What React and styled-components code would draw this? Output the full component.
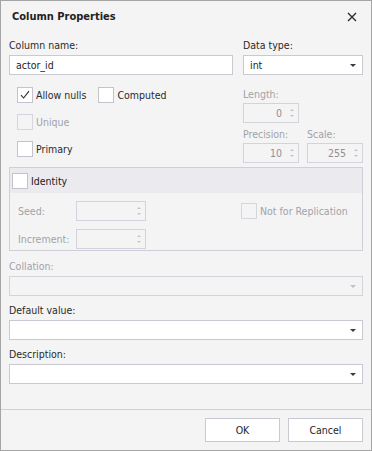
import React from "react";
import styled, { createGlobalStyle, css } from "styled-components";

const Global = createGlobalStyle`
  html, body { margin: 0; padding: 0; background: #ffffff; }
  * { box-sizing: border-box; }
`;

const FONT = `"DejaVu Sans Condensed", "Liberation Sans", sans-serif`;

const Window = styled.div`
  width: 372px;
  height: 451px;
  border: 1px solid #a5a5a5;
  background: #f4f4f4;
  display: flex;
  flex-direction: column;
  font-family: ${FONT};
  font-size: 10.5px;
  color: #252525;
`;

const TitleBar = styled.div`
  height: 31px;
  flex: none;
  display: flex;
  align-items: center;
  justify-content: space-between;
  padding: 0 14px 0 11px;
  font-weight: bold;
  font-size: 11px;
  color: #222;
`;

const CloseButton = styled.button`
  border: 0;
  background: none;
  padding: 0;
  width: 11px;
  height: 11px;
  display: flex;
  align-items: center;
  justify-content: center;
  margin-top: 1px;
`;

const Content = styled.div`
  flex: 1;
  padding: 6px 8px 0 8px;
  display: flex;
  flex-direction: column;
`;

const TopGrid = styled.div`
  display: grid;
  grid-template-columns: 224px 120px;
  column-gap: 10px;
`;

const Field = styled.div`
  display: flex;
  flex-direction: column;
  gap: 3px;
`;

const Label = styled.div`
  height: 14px;
  line-height: 14px;
  white-space: nowrap;
  color: ${(p) => (p.$disabled ? "#a2a2aa" : "#2a2a2a")};
`;

const boxBase = css`
  height: 20px;
  border: 1px solid #c9c9d3;
  background: #ffffff;
  display: flex;
  align-items: center;
`;

const TextInput = styled.div`
  ${boxBase};
  padding-left: 6px;
  color: #1e1e1e;
`;

const Combo = styled.div`
  ${boxBase};
  padding: 0 6px 0 6px;
  justify-content: space-between;
  color: #1e1e1e;
  ${(p) =>
    p.$disabled &&
    css`
      background: #f4f4f4;
      border-color: #d3d3db;
    `}
`;

const Arrow = styled.span`
  width: 0;
  height: 0;
  border-left: 3.5px solid transparent;
  border-right: 3.5px solid transparent;
  border-top: 3.5px solid ${(p) => (p.$disabled ? "#c2c2c8" : "#3a3a3a")};
  margin-top: 1px;
`;

const MiddleGrid = styled.div`
  display: grid;
  grid-template-columns: 224px 120px;
  column-gap: 10px;
  margin-top: 12px;
`;

const CheckColumn = styled.div`
  display: flex;
  flex-direction: column;
  gap: 11px;
  padding-left: 8px;
`;

const CheckRow = styled.div`
  display: flex;
  align-items: center;
  gap: 12px;
`;

const CheckItem = styled.label`
  display: flex;
  align-items: center;
  gap: 3px;
  height: 16px;
  white-space: nowrap;
  color: ${(p) => (p.$disabled ? "#a2a2aa" : p.$strong ? "#1a1a1a" : "#2a2a2a")};
`;

const Box = styled.span`
  width: 16px;
  height: 16px;
  flex: none;
  border: 1px solid ${(p) => (p.$disabled ? "#d6d6de" : "#c3c3cd")};
  background: ${(p) => (p.$disabled ? "transparent" : "#ffffff")};
  display: flex;
  align-items: center;
  justify-content: center;
`;

const SizeColumn = styled.div`
  display: flex;
  flex-direction: column;
`;

const SizeRow = styled.div`
  display: grid;
  grid-template-columns: 56px 56px;
  column-gap: 8px;
  margin-top: ${(p) => p.$mt || 0}px;
`;

const SizeField = styled.div`
  display: flex;
  flex-direction: column;
  gap: 2px;
`;

const Spin = styled.div`
  height: 20px;
  width: ${(p) => p.$w || 56}px;
  border: 1px solid #d3d3db;
  background: #f4f4f4;
  display: flex;
  align-items: center;
  justify-content: flex-end;
  padding-right: 3px;
  gap: 6px;
  color: #8e8e94;
`;

const SpinArrows = styled.span`
  display: flex;
  flex-direction: column;
  gap: 4px;
  width: 7px;
  align-items: center;
`;

const TriUp = styled.span`
  width: 0;
  height: 0;
  border-left: 2.5px solid transparent;
  border-right: 2.5px solid transparent;
  border-bottom: 2.5px solid #c4c4ca;
`;

const TriDown = styled.span`
  width: 0;
  height: 0;
  border-left: 2.5px solid transparent;
  border-right: 2.5px solid transparent;
  border-top: 2.5px solid #c4c4ca;
`;

const Group = styled.div`
  margin-top: 4px;
  border: 1px solid #cfcfd9;
  display: flex;
  flex-direction: column;
`;

const GroupHeader = styled.div`
  height: 25px;
  background: #ebebef;
  display: flex;
  align-items: center;
  padding-left: 2px;
`;

const GroupBody = styled.div`
  display: grid;
  grid-template-columns: 58px 70px 95px 1fr;
  grid-auto-rows: 20px;
  row-gap: 8px;
  align-items: center;
  padding: 8px 0 1px 8px;
`;

const Section = styled.div`
  display: flex;
  flex-direction: column;
  gap: 3px;
  margin-top: ${(p) => p.$mt}px;
`;

const Footer = styled.div`
  flex: none;
  border-top: 1px solid #cfcfd9;
  padding: 8px 8px;
  display: flex;
  justify-content: flex-end;
  gap: 8px;
`;

const Button = styled.button`
  width: 75px;
  height: 24px;
  border: 1px solid #c9c9d3;
  background: #ffffff;
  font-family: ${FONT};
  font-size: 10.5px;
  color: #1e1e1e;
  padding: 0;
`;

const Check = () => (
  <svg width="12" height="12" viewBox="0 0 12 12">
    <path d="M2 6.2 L4.6 9 L10 2.2" fill="none" stroke="#2b2b2b" strokeWidth="1.1" />
  </svg>
);

const SpinBox = ({ value, w }) => (
  <Spin $w={w}>
    <span>{value}</span>
    <SpinArrows>
      <TriUp />
      <TriDown />
    </SpinArrows>
  </Spin>
);

export default function App() {
  return (
    <>
      <Global />
      <Window>
        <TitleBar>
          <span>Column Properties</span>
          <CloseButton aria-label="Close">
            <svg width="10" height="10" viewBox="0 0 10 10">
              <path d="M1 1 L9 9 M9 1 L1 9" stroke="#2e2e2e" strokeWidth="1.4" />
            </svg>
          </CloseButton>
        </TitleBar>
        <Content>
          <TopGrid>
            <Field>
              <Label>Column name:</Label>
              <TextInput>actor_id</TextInput>
            </Field>
            <Field>
              <Label>Data type:</Label>
              <Combo>
                <span>int</span>
                <Arrow />
              </Combo>
            </Field>
          </TopGrid>

          <MiddleGrid>
            <CheckColumn>
              <CheckRow>
                <CheckItem>
                  <Box>
                    <Check />
                  </Box>
                  Allow nulls
                </CheckItem>
                <CheckItem>
                  <Box />
                  Computed
                </CheckItem>
              </CheckRow>
              <CheckItem $disabled>
                <Box $disabled />
                Unique
              </CheckItem>
              <CheckItem>
                <Box />
                Primary
              </CheckItem>
            </CheckColumn>
            <SizeColumn>
              <SizeField>
                <Label $disabled>Length:</Label>
                <SpinBox value="0" />
              </SizeField>
              <SizeRow $mt={4}>
                <SizeField>
                  <Label $disabled>Precision:</Label>
                  <SpinBox value="10" />
                </SizeField>
                <SizeField>
                  <Label $disabled>Scale:</Label>
                  <SpinBox value="255" />
                </SizeField>
              </SizeRow>
            </SizeColumn>
          </MiddleGrid>

          <Group>
            <GroupHeader>
              <CheckItem $strong>
                <Box />
                Identity
              </CheckItem>
            </GroupHeader>
            <GroupBody>
              <Label $disabled>Seed:</Label>
              <SpinBox value="" w={70} />
              <span />
              <CheckItem $disabled>
                <Box $disabled />
                Not for Replication
              </CheckItem>
              <Label $disabled>Increment:</Label>
              <SpinBox value="" w={70} />
            </GroupBody>
          </Group>

          <Section $mt={8}>
            <Label $disabled>Collation:</Label>
            <Combo $disabled>
              <span />
              <Arrow $disabled />
            </Combo>
          </Section>
          <Section $mt={7}>
            <Label>Default value:</Label>
            <Combo>
              <span />
              <Arrow />
            </Combo>
          </Section>
          <Section $mt={7}>
            <Label>Description:</Label>
            <Combo>
              <span />
              <Arrow />
            </Combo>
          </Section>
        </Content>
        <Footer>
          <Button>OK</Button>
          <Button>Cancel</Button>
        </Footer>
      </Window>
    </>
  );
}
